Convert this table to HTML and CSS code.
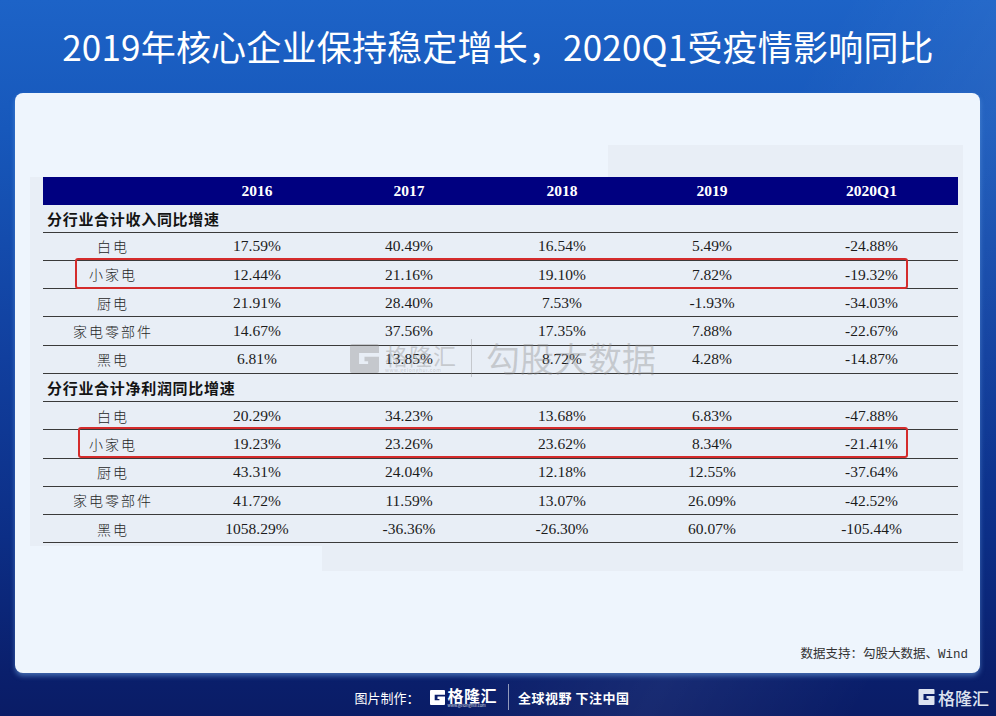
FILE: index.html
```html
<!DOCTYPE html>
<html lang="zh-CN">
<head>
<meta charset="utf-8">
<title>2019年核心企业保持稳定增长</title>
<link rel="stylesheet" href="styles.css">
</head>
<body>
<div class="page">
  <header class="title">2019年核心企业保持稳定增长，2020Q1受疫情影响同比</header>
  <main class="panel">
    <div class="table-area">
      <div class="strip-top"><div class="strip-block"></div></div>
      <div class="table-box">
        <table class="data">
          <colgroup>
            <col class="c-label"><col class="c1"><col class="c2"><col class="c3"><col class="c4"><col class="c5">
          </colgroup>
          <thead>
            <tr class="head"><th></th><th>2016</th><th>2017</th><th>2018</th><th>2019</th><th>2020Q1</th></tr>
          </thead>
          <tbody>
            <tr class="sec first"><td colspan="6">分行业合计收入同比增速</td></tr>
            <tr><td class="lbl">白电</td><td>17.59%</td><td>40.49%</td><td>16.54%</td><td>5.49%</td><td>-24.88%</td></tr>
            <tr><td class="lbl">小家电</td><td>12.44%</td><td>21.16%</td><td>19.10%</td><td>7.82%</td><td>-19.32%</td></tr>
            <tr><td class="lbl">厨电</td><td>21.91%</td><td>28.40%</td><td>7.53%</td><td>-1.93%</td><td>-34.03%</td></tr>
            <tr><td class="lbl">家电零部件</td><td>14.67%</td><td>37.56%</td><td>17.35%</td><td>7.88%</td><td>-22.67%</td></tr>
            <tr><td class="lbl">黑电</td><td>6.81%</td><td>13.85%</td><td>8.72%</td><td>4.28%</td><td>-14.87%</td></tr>
            <tr class="sec"><td colspan="6">分行业合计净利润同比增速</td></tr>
            <tr><td class="lbl">白电</td><td>20.29%</td><td>34.23%</td><td>13.68%</td><td>6.83%</td><td>-47.88%</td></tr>
            <tr><td class="lbl">小家电</td><td>19.23%</td><td>23.26%</td><td>23.62%</td><td>8.34%</td><td>-21.41%</td></tr>
            <tr><td class="lbl">厨电</td><td>43.31%</td><td>24.04%</td><td>12.18%</td><td>12.55%</td><td>-37.64%</td></tr>
            <tr><td class="lbl">家电零部件</td><td>41.72%</td><td>11.59%</td><td>13.07%</td><td>26.09%</td><td>-42.52%</td></tr>
            <tr><td class="lbl">黑电</td><td>1058.29%</td><td>-36.36%</td><td>-26.30%</td><td>60.07%</td><td>-105.44%</td></tr>
          </tbody>
        </table>
        <div class="hl hl-1"></div>
        <div class="hl hl-2"></div>
        <div class="watermark">
          <svg class="wm-g" viewBox="0 0 16 16"><path d="M1 0H15Q16 0 16 1V5H5V11H10V9.5H8V7H16V15Q16 16 15 16H1Q0 16 0 15V1Q0 0 1 0Z" fill="currentColor"/></svg>
          <div class="wm-brand"><span class="wm-name">格隆汇</span><span class="wm-url">www.gelonghui.com</span></div>
          <span class="wm-div"></span>
          <span class="wm-text">勾股大数据</span>
        </div>
      </div>
      <div class="strip-bottom"><div class="strip-block2"></div></div>
    </div>
    <div class="source">数据支持：勾股大数据、Wind</div>
  </main>
  <footer class="footer">
    <div></div>
    <div class="credit">
      <span class="made">图片制作：</span>
      <svg class="logo-g" viewBox="0 0 16 16"><path d="M1 0H15Q16 0 16 1V5H5V11H10V9.5H8V7H16V15Q16 16 15 16H1Q0 16 0 15V1Q0 0 1 0Z" fill="currentColor"/></svg>
      <span class="brand"><span class="brand-name">格隆汇</span><span class="brand-url">www.gelonghui.com</span></span>
      <span class="vdiv"></span>
      <span class="slogan">全球视野 下注中国</span>
    </div>
    <div class="corner-logo">
      <svg class="logo-g2" viewBox="0 0 16 16"><path d="M1 0H15Q16 0 16 1V5H5V11H10V9.5H8V7H16V15Q16 16 15 16H1Q0 16 0 15V1Q0 0 1 0Z" fill="currentColor"/></svg>
      <span class="corner-name">格隆汇</span>
    </div>
  </footer>
</div>
</body>
</html>
```
FILE: styles.css
```css
* { box-sizing: border-box; }
html, body { margin: 0; padding: 0; }
body {
  width: 996px;
  height: 716px;
  overflow: hidden;
  font-family: "Noto Sans CJK SC", "Noto Sans", sans-serif;
}
.page {
  width: 996px;
  height: 716px;
  display: flex;
  flex-direction: column;
  background:
    linear-gradient(120deg, rgba(255,255,255,0) 60%, rgba(255,255,255,0.06) 75%, rgba(255,255,255,0) 90%),
    linear-gradient(180deg, #1d63c7 0%, #1758bb 18%, #113f9e 50%, #0c2e86 75%, #0a1f6c 94%, #0a1c66 100%);
}
.title {
  height: 93px;
  flex: none;
  display: flex;
  align-items: center;
  justify-content: center;
  color: #ffffff;
  font-size: 35px;
  font-weight: 400;
  letter-spacing: 0.2px;
  padding-bottom: 2px;
}
.panel {
  flex: none;
  margin-left: 15px;
  width: 965px;
  height: 580px;
  border-radius: 8px;
  background: #eef5fd;
  padding: 52px 0 0 15px;
  display: flex;
  flex-direction: column;
  box-shadow: 0 3px 5px rgba(110, 165, 230, 0.55);
}
.table-area {
  width: 933px;
  display: flex;
  flex-direction: column;
}
.strip-top { height: 32px; display: flex; }
.strip-block { margin-left: auto; width: 355px; height: 32px; background: #e8eef6; }
.strip-bottom { height: 25px; display: flex; }
.strip-block2 { margin-left: auto; width: 641px; height: 25px; background: #e8eef6; }
.table-box {
  position: relative;
  background: #e8eef6;
  padding: 0 5px 3px 13px;
}
.data {
  width: 915px;
  border-collapse: collapse;
  table-layout: fixed;
  font-family: "Liberation Serif", "Noto Sans CJK SC", serif;
  font-size: 15.5px;
  color: #1b1b1b;
}
.c-label { width: 138px; }
.c1 { width: 152px; }
.c2 { width: 152px; }
.c3 { width: 154px; }
.c4 { width: 146px; }
.c5 { width: 173px; }
.head th {
  height: 28px;
  background: #000080;
  color: #ffffff;
  font-weight: 700;
  font-size: 15.5px;
  text-align: center;
  padding: 0;
}
.data td {
  height: 28.25px;
  padding: 0;
  text-align: center;
  border-bottom: 1px solid #3a3a3a;
  line-height: 1;
}
.sec.first td { height: 27px; }
.sec td {
  text-align: left;
  padding-left: 4px;
  font-family: "Noto Sans CJK SC", sans-serif;
  font-weight: 700;
  font-size: 15px;
  letter-spacing: 0.7px;
  color: #141414;
}
.data td.lbl {
  font-family: "Noto Sans CJK SC", sans-serif;
  font-size: 14px;
  letter-spacing: 2px;
  padding-left: 2px;
  color: #262626;
  font-weight: 300;
}
.hl {
  position: absolute;
  border: 2px solid #d42b2b;
  border-radius: 3px;
}
.hl-1 { left: 45px; top: 81px; width: 833px; height: 31px; }
.hl-2 { left: 48px; top: 250px; width: 830px; height: 31px; }
.watermark {
  position: absolute;
  left: 320px;
  top: 162px;
  display: flex;
  align-items: center;
  gap: 6px;
  color: rgba(140, 140, 140, 0.38);
  pointer-events: none;
}
.wm-g { width: 29px; height: 29px; display: block; }
.wm-brand { display: flex; flex-direction: column; align-items: flex-start; line-height: 1; }
.wm-name { font-size: 23px; letter-spacing: 1px; line-height: 24px; }
.wm-url { font-size: 5px; line-height: 6px; letter-spacing: 0.5px; }
.wm-div { width: 1px; height: 38px; background: rgba(140,140,140,0.38); margin: 0 8px 0 8px; }
.wm-text { font-size: 34px; line-height: 1; }
.source {
  margin-top: auto;
  align-self: flex-end;
  margin-right: 12px;
  margin-bottom: 11px;
  font-family: "Liberation Mono", "Noto Sans CJK SC", monospace;
  font-size: 12.5px;
  color: #333333;
}
.footer {
  flex: 1;
  display: grid;
  grid-template-columns: 1fr auto 1fr;
  align-items: center;
  padding-top: 5px;
}
.credit {
  display: flex;
  align-items: center;
  color: #ffffff;
  margin-right: 12px;
}
.made { font-size: 13px; margin-right: 10px; }
.logo-g { width: 15px; height: 15px; display: block; color: #ffffff; margin-right: 3px; }
.brand { display: flex; flex-direction: column; align-items: flex-start; }
.brand-name { font-size: 16px; font-weight: 700; letter-spacing: 0.5px; line-height: 16px; }
.brand-url { font-size: 4px; line-height: 5px; opacity: 0.8; }
.vdiv { width: 1px; height: 26px; background: rgba(255,255,255,0.55); margin: 0 9px 0 11px; }
.slogan { font-size: 13px; font-weight: 700; letter-spacing: 0.5px; }
.corner-logo {
  justify-self: end;
  margin-right: 7px;
  display: flex;
  align-items: center;
  gap: 3px;
  color: #dde3f0;
}
.logo-g2 { width: 17px; height: 16px; display: block; }
.corner-name { font-size: 17px; line-height: 1; font-weight: 500; }
```
